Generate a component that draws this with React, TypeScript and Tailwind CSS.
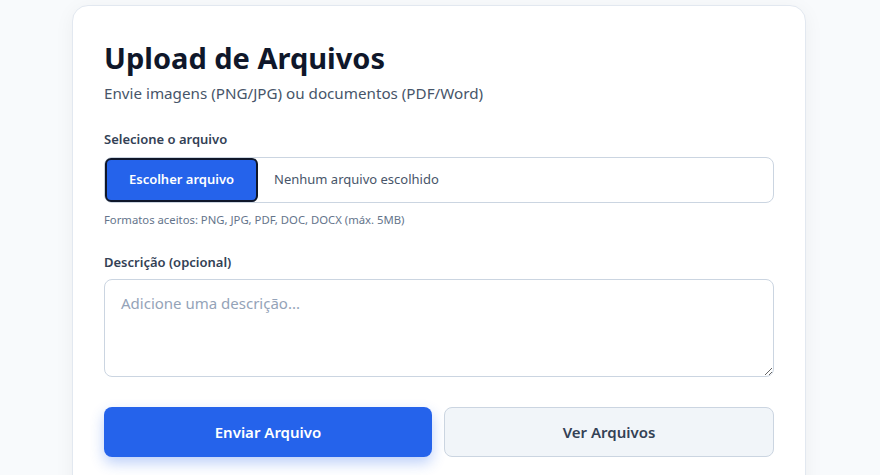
export default function App() {
  return (
    <div
      className="min-h-screen bg-[#f8fafc] pt-[5px]"
      style={{ fontFamily: '"Noto Sans", "Open Sans", sans-serif' }}
    >
      <div className="ml-[72px] w-[734px] rounded-2xl border border-[#e2e8f0] bg-white px-[31px] pt-[32px] pb-10 shadow-[0_4px_20px_rgba(15,23,42,0.05)]">
        <h1 className="text-[29px] font-bold leading-[40px] text-[#0f172a]">Upload de Arquivos</h1>
        <p className="mt-[3px] text-[15.2px] leading-6 text-[#475569]">
          Envie imagens (PNG/JPG) ou documentos (PDF/Word)
        </p>

        <div className="mt-[24px]">
          <label className="block text-[13px] font-semibold leading-5 text-[#334155]">Selecione o arquivo</label>
          <div className="mt-[8px] flex h-[46px] items-center rounded-lg border border-[#cbd5e1] bg-white">
            <button className="h-[44px] w-[153px] rounded-md border-2 border-[#0f172a] bg-[#2563eb] text-[13px] font-semibold text-white">
              Escolher arquivo
            </button>
            <span className="ml-4 text-[13px] text-[#475569]">Nenhum arquivo escolhido</span>
          </div>
          <p className="mt-[9px] text-[11.3px] leading-4 text-[#64748b]">
            Formatos aceitos: PNG, JPG, PDF, DOC, DOCX (máx. 5MB)
          </p>
        </div>

        <div className="mt-[24px]">
          <label className="block text-[13px] font-semibold leading-5 text-[#334155]">Descrição (opcional)</label>
          <textarea
            className="mt-[7px] block h-[98px] w-full rounded-lg border border-[#cbd5e1] px-4 py-3 text-[15px] text-[#0f172a] placeholder:text-[#94a3b8] outline-none"
            placeholder="Adicione uma descrição..."
          />
        </div>

        <div className="mt-[30px] flex gap-3">
          <button className="h-[50px] flex-1 rounded-lg bg-[#2563eb] text-[15px] font-semibold text-white shadow-[0_6px_14px_rgba(37,99,235,0.3)]">
            Enviar Arquivo
          </button>
          <button className="h-[50px] flex-1 rounded-lg border border-[#cbd5e1] bg-[#f1f5f9] text-[15px] font-semibold text-[#334155]">
            Ver Arquivos
          </button>
        </div>
      </div>
    </div>
  );
}
